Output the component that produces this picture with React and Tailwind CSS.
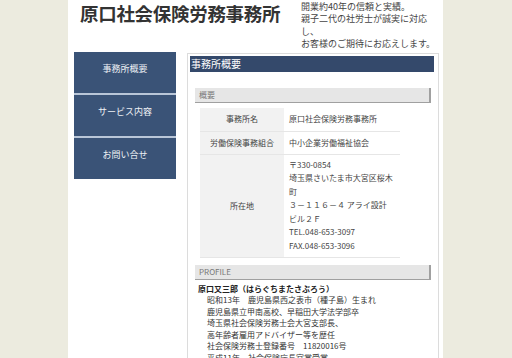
import React from 'react';

const navItems = ['事務所概要', 'サービス内容', 'お問い合せ'];

const profileLines = [
  '昭和13年　鹿児島県西之表市（種子島）生まれ',
  '鹿児島県立甲南高校、早稲田大学法学部卒',
  '埼玉県社会保険労務士会大宮支部長、',
  '高年齢者雇用アドバイザー等を歴任',
  '社会保険労務士登録番号　11820016号',
  '平成11年　社会保険庁長官賞受賞',
];

const addressLines = [
  '〒330-0854',
  '埼玉県さいたま市大宮区桜木',
  '町',
  '３－１１６－４ アライ設計',
  'ビル２Ｆ',
  'TEL.048-653-3097',
  'FAX.048-653-3096',
];

function SubBar({ label }) {
  return (
    <div className="ml-[5px] w-[236px] h-[15px] bg-[#e6e6e6] border-r-2 border-b border-[#a0a0a0] pl-[4px] text-[8px] leading-[14px] text-[#777]">
      {label}
    </div>
  );
}

export default function App() {
  return (
    <div className="flex h-[358px] overflow-hidden bg-[#ecebdf] font-['Noto_Sans_CJK_JP','Noto_Sans',sans-serif] text-[#333]">
      <div className="w-[68px] shrink-0" />
      <div className="w-[375px] shrink-0 bg-white">
        {/* header */}
        <div className="flex h-[52px]">
          <div className="w-[233px] pl-[12px] pt-[1px]">
            <h1 className="text-[18.5px] leading-[24px] font-bold text-[#333] tracking-[-0.3px]">原口社会保険労務事務所</h1>
          </div>
          <div className="w-[138px] pt-[1px] text-[9px] leading-[12.4px] text-[#444]">
            <p>開業約40年の信頼と実績。</p>
            <p>親子二代の社労士が誠実に対応し、</p>
            <p>お客様のご期待にお応えします。</p>
          </div>
        </div>

        <div className="flex items-start pl-[6px]">
          {/* nav */}
          <div className="w-[102px] bg-[#b9c6d8]">
            {navItems.map((item, i) => (
              <div
                key={item}
                className={`h-[41px] bg-[#3a5377] pt-[11px] text-center text-[9px] leading-[12px] text-[#eef1f5] ${i > 0 ? 'mt-[2px]' : ''}`}
              >
                {item}
              </div>
            ))}
          </div>

          {/* content */}
          <div className="ml-[11px] mt-[1px] w-[252px] h-[320px] border border-[#dcdcdc] pt-[2px] pl-[2px]">
            <div className="w-[244px] h-[16px] bg-[#34496b] pl-[1px] text-[10px] leading-[16px] text-white">
              事務所概要
            </div>

            <div className="mt-[16px]">
              <SubBar label="概要" />
            </div>

            <table className="mt-[5px] ml-[10px] w-[200px] border-collapse text-[8px] text-[#444]">
              <tbody>
                <tr className="border-b border-[#e6e6e6]">
                  <td className="w-[84px] h-[23px] bg-[#f2f2f2] text-center">事務所名</td>
                  <td className="pl-[5px]">原口社会保険労務事務所</td>
                </tr>
                <tr className="border-b border-[#e6e6e6]">
                  <td className="w-[84px] h-[23px] bg-[#f2f2f2] text-center">労働保険事務組合</td>
                  <td className="pl-[5px]">中小企業労働福祉協会</td>
                </tr>
                <tr className="border-b border-[#e6e6e6]">
                  <td className="w-[84px] bg-[#f2f2f2] text-center">所在地</td>
                  <td className="pl-[5px] pt-[3px] pb-[4px] leading-[13.6px]">
                    {addressLines.map((l) => (
                      <div key={l}>{l}</div>
                    ))}
                  </td>
                </tr>
              </tbody>
            </table>

            <div className="mt-[7px]">
              <SubBar label="PROFILE" />
            </div>

            <div className="mt-[3px] ml-[8px] text-[8px] leading-[11.5px] text-[#333]">
              <div className="font-bold text-[#222]">原口又三郎（はらぐちまたさぶろう）</div>
              <div className="pl-[9px]">
                {profileLines.map((l) => (
                  <div key={l}>{l}</div>
                ))}
              </div>
            </div>
          </div>
        </div>
      </div>
      <div className="flex-1" />
    </div>
  );
}
